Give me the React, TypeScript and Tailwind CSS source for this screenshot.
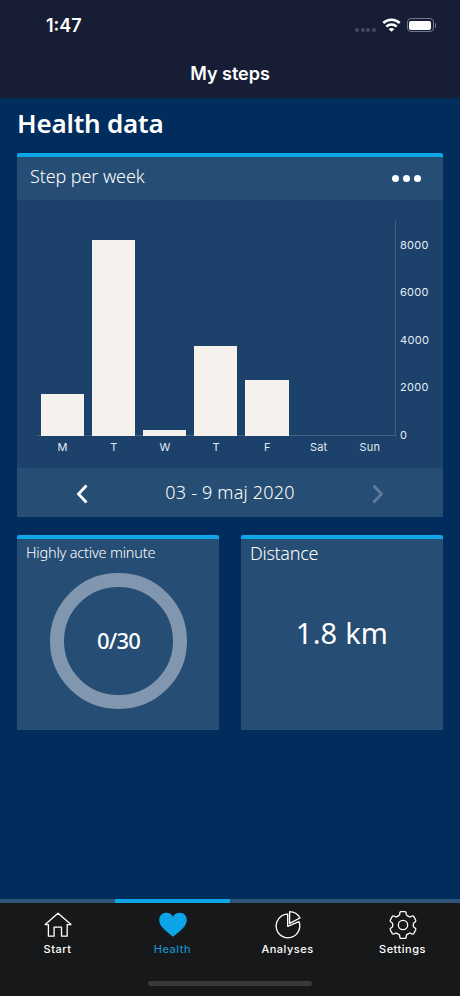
import { ReactNode } from "react"

const frutiger = "font-['Noto_Sans',sans-serif]"

const steps = [
  { day: "M", height: 42 },
  { day: "T", height: 196 },
  { day: "W", height: 6 },
  { day: "T", height: 90 },
  { day: "F", height: 56 },
  { day: "Sat", height: 0 },
  { day: "Sun", height: 0 },
]

const ticks = ["8000", "6000", "4000", "2000", "0"]

function HomeIcon() {
  return (
    <svg width="28" height="28" viewBox="0 0 28 28" fill="none" stroke="#fff" strokeWidth="1.3" strokeLinejoin="round">
      <path d="M14 2.3 1.2 13.6h3.2v11.6h5.7v-9h7.4v9h5.7V13.6H27L14 2.3Z" />
    </svg>
  )
}

function HeartIcon() {
  return (
    <svg width="28" height="28" viewBox="0 0 28 28" fill="#0aa6e8">
      <path d="M14 25.8C10 22.3 4.9 18.4 2.2 14.9C-1.6 9.8.2 1.8 7.2 1.8c3.2 0 5.6 1.5 6.8 4.1 1.2-2.6 3.6-4.1 6.8-4.1 7 0 8.8 8 5 13.1C23.1 18.4 18 22.3 14 25.8Z" />
    </svg>
  )
}

function PieIcon() {
  return (
    <svg width="28" height="28" viewBox="0 0 28 28" fill="none" stroke="#fff" strokeWidth="1.3" strokeLinejoin="round">
      <path d="M13.7 3.2A11.8 11.8 0 1 0 24.9 10.6L13.7 15.3Z" />
      <path d="M15.6.7A12.3 12.3 0 0 1 26 7L15.6 12.4Z" />
    </svg>
  )
}

function GearIcon() {
  return (
    <svg width="28" height="28" viewBox="0 0 84 84" fill="none" stroke="#fff" strokeWidth="3.9" strokeLinejoin="round">
      <path d="M36 2H48Q51 2 51.500 5L52 11Q52.500 13 55 14L60 17Q62 18.500 64 17.500L69 15Q72 13.500 74 16L80 27Q81.500 30 79 32L75 35Q73 36.500 73 39V45Q73 47.500 75 49L79 52Q81.500 54 80 57L74 68Q72 70.500 69 69L64 66.500Q62 65.500 60 67L55 70Q52.500 71 52 73L51.500 79Q51 82 48 82H36Q33 82 32.500 79L32 73Q31.500 71 29 70L24 67Q22 65.500 20 66.500L15 69Q12 70.500 10 68L4 57Q2.500 54 5 52L9 49Q11 47.500 11 45V39Q11 36.500 9 35L5 32Q2.500 30 4 27L10 16Q12 13.500 15 15L20 17.500Q22 18.500 24 17L29 14Q31.500 13 32 11L32.500 5Q33 2 36 2Z" />
      <circle cx="42" cy="42" r="14" />
    </svg>
  )
}

function StatusBar() {
  return (
    <div className="flex h-[50px] items-center justify-between pt-0.5 pr-[24px] pl-[46px] text-white">
      <span className="text-[18px] leading-5 font-semibold">1:47</span>
      <div className="flex items-center">
        <div className="mt-[7px] flex gap-[1.5px]">
          {[0, 1, 2, 3].map((i) => (
            <span key={i} className="size-1 rounded-full bg-[#464b60]" />
          ))}
        </div>
        <svg className="-mt-0.5 ml-1.5" width="19" height="14" viewBox="0 0 19 14" fill="none" stroke="#fff" strokeWidth="2.5">
          <path d="M1.3 5a11.7 11.7 0 0 1 16.4 0" />
          <path d="M4.3 8.700a7.400 7.400 0 0 1 10.400 0" />
          <path d="M9.500 13.800 6.700 11.200a3.900 3.900 0 0 1 5.600 0Z" fill="#fff" stroke="none" />
        </svg>
        <div className="-mt-0.5 ml-[6px] h-[14px] w-[27px] rounded-[4px] border border-[#73778a] p-[1.5px]">
          <div className="h-full rounded-[2px] bg-white" />
        </div>
        <span className="-mt-0.5 ml-px h-[5px] w-[1.5px] rounded-r bg-[#73778a]" />
      </div>
    </div>
  )
}

function Chart() {
  return (
    <div className="flex h-[268px] bg-[#1c416a] pt-5 pl-5 text-[11px] text-[#e4edf5]">
      <div className="w-[358.5px]">
        <div className="grid h-[216px] grid-cols-7 items-end justify-items-center border-r-[1.5px] border-b border-[#46607b]">
          {steps.map((step, i) => (
            <div key={i} className="-mb-px w-[43.5px] bg-[#f5f1ec]" style={{ height: step.height }} />
          ))}
        </div>
        <div className="mt-[3px] grid grid-cols-7 text-center leading-4 tracking-[0.2px]">
          {steps.map((step, i) => (
            <span key={i}>{step.day}</span>
          ))}
        </div>
      </div>
      <div className="mt-[18px] ml-[4.5px] flex h-[204.5px] flex-col justify-between leading-[14px] tracking-[0.3px]">
        {ticks.map((tick) => (
          <span key={tick}>{tick}</span>
        ))}
      </div>
    </div>
  )
}

function Chevron({ left, color }: { left?: boolean; color: string }) {
  return (
    <svg className="mt-[3px]" width="14" height="20" viewBox="0 0 14 20" fill="none" stroke={color} strokeWidth="2.8">
      <path d={left ? "M11.5 1.5 3.5 10l8 8.5" : "M2.5 1.5l8 8.5-8 8.5"} />
    </svg>
  )
}

function StatCard({ children }: { children: ReactNode }) {
  return (
    <div className="h-[195px] w-[202px] rounded-t-[2px] border-t-[4.5px] border-[#0fa6e8] bg-[#264d73]">{children}</div>
  )
}

const tabs = [
  { name: "Start", icon: <HomeIcon /> },
  { name: "Health", icon: <HeartIcon />, active: true },
  { name: "Analyses", icon: <PieIcon /> },
  { name: "Settings", icon: <GearIcon /> },
]

export default function App() {
  return (
    <div className="flex h-[996px] w-[460px] flex-col overflow-hidden bg-[#002d5c] font-['Inter',sans-serif]">
      <header className="h-[98px] bg-[#161d35]">
        <StatusBar />
        <h1 className="text-center text-[18px] leading-[48px] font-semibold text-white">My steps</h1>
      </header>

      <main className={`flex-1 px-[17px] text-white ${frutiger}`}>
        <h2 className="h-[54.5px] pt-[7px] text-[26px] leading-[36px] font-semibold tracking-[-0.2px]">Health data</h2>

        {/* Weekly chart */}
        <section className="rounded-t-[2px] border-t-[4.5px] border-[#0fa6e8] bg-[#264d73]">
          <div className="flex h-[43px] items-center justify-between pr-[22px] pl-[13px]">
            <span className="mb-[5px] text-[18px] leading-6 font-light tracking-[-0.1px]">Step per week</span>
            <div className="mt-[1px] flex gap-[3.5px]">
              {[0, 1, 2].map((i) => (
                <span key={i} className="size-[7.5px] rounded-full bg-white" />
              ))}
            </div>
          </div>
          <div className="font-['Inter',sans-serif]">
            <Chart />
          </div>
          <div className="flex h-[49px] items-center justify-between px-[58px]">
            <Chevron left color="#fff" />
            <span className="text-[18px] leading-6 font-light tracking-[0.2px]">03 - 9 maj 2020</span>
            <Chevron color="#5e7b99" />
          </div>
        </section>

        <div className="mt-[18px] flex justify-between">
          <StatCard>
            <h3 className="pl-[9px] text-[14.5px] leading-[26px] font-light tracking-[-0.2px]">Highly active minute</h3>
            <div className="mt-[8px] ml-[33px] flex h-[136px] w-[137px] items-center justify-center rounded-full border-[14.5px] border-[#8097af]">
              <span className="mb-0.5 text-[22px] leading-8 font-medium tracking-[-0.8px]">0/30</span>
            </div>
          </StatCard>
          <StatCard>
            <h3 className="pl-[9px] text-[18px] leading-[29px] font-light tracking-[-0.3px]">Distance</h3>
            <p className="mt-[44px] text-center text-[29px] leading-[42px] tracking-[0.2px]">1.8 km</p>
          </StatCard>
        </div>
      </main>

      <nav className="h-[97.5px] bg-[#17181a]">
        <div className="grid grid-cols-4">
          {tabs.map((tab) => (
            <div
              key={tab.name}
              className={`flex flex-col items-center border-t-[4.5px] pt-[8px] ${
                tab.active ? "border-[#0fa6e8] text-[#138fc6]" : "border-[#305379] text-white"
              }`}
            >
              {tab.icon}
              <span className="mt-[2px] text-[11px] leading-4 font-medium tracking-[0.5px]">{tab.name}</span>
            </div>
          ))}
        </div>
        <div className="mx-auto mt-[24px] h-[5.5px] w-[164px] rounded-full bg-[#39393b]" />
      </nav>
    </div>
  )
}
